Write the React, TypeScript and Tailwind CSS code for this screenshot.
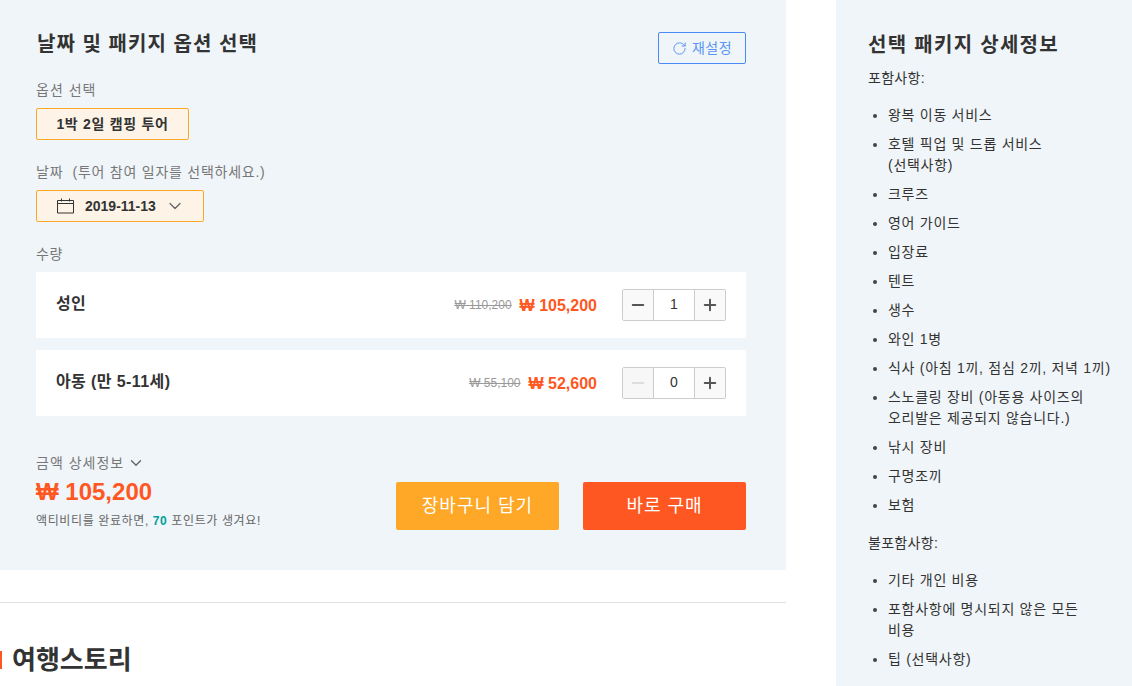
import { ChevronDown, Minus, Plus, RotateCw } from "lucide-react";

const included = [
  "왕복 이동 서비스",
  "호텔 픽업 및 드롭 서비스\n(선택사항)",
  "크루즈",
  "영어 가이드",
  "입장료",
  "텐트",
  "생수",
  "와인 1병",
  "식사 (아침 1끼, 점심 2끼, 저녁 1끼)",
  "스노클링 장비 (아동용 사이즈의\n오리발은 제공되지 않습니다.)",
  "낚시 장비",
  "구명조끼",
  "보험",
];

const excluded = ["기타 개인 비용", "포함사항에 명시되지 않은 모든\n비용", "팁 (선택사항)"];

function Bullets({ items }: { items: string[] }) {
  return (
    <ul className="mt-[16px] flex flex-col gap-[8px]">
      {items.map((item) => (
        <li key={item} className="flex text-[14px] leading-[21px] tracking-[0.72px] whitespace-pre-line text-[#333]">
          <span className="mt-[9px] ml-[5px] mr-[11px] h-[4px] w-[4px] shrink-0 rounded-full bg-[#444]" />
          <span>{item}</span>
        </li>
      ))}
    </ul>
  );
}

function Stepper({ value, minusDisabled }: { value: number; minusDisabled?: boolean }) {
  return (
    <div className="-mt-[1px] flex h-[32px] w-[104px] rounded-[2px] border border-[#ccc] bg-white">
      <div className={`flex w-[30px] items-center justify-center ${minusDisabled ? "bg-[#f7f7f7] text-[#ddd]" : "bg-[#f9f9f9] text-[#555]"}`}>
        <Minus size={18} strokeWidth={2.6} />
      </div>
      <div className="flex flex-1 items-center justify-center border-x border-[#ccc] text-[14px] text-[#333]">
        {value}
      </div>
      <div className="flex w-[30px] items-center justify-center bg-[#f9f9f9] text-[#555]">
        <Plus size={18} strokeWidth={2.6} />
      </div>
    </div>
  );
}

function PriceRow({ name, oldPrice, price, qty, minusDisabled }: { name: string; oldPrice: string; price: string; qty: number; minusDisabled?: boolean }) {
  return (
    <div className="flex h-[66px] items-center bg-white pl-[20px] pr-[20px]">
      <div className="-mt-[2px] flex-1 text-[16px] font-bold tracking-[0.4px] text-[#333]">{name}</div>
      <div className="text-[12px] text-[#999] line-through">₩ {oldPrice}</div>
      <div className="ml-[8px] mt-[2px] text-[16px] font-bold text-[#ff5722]">₩ {price}</div>
      <div className="ml-[25px]">
        <Stepper value={qty} minusDisabled={minusDisabled} />
      </div>
    </div>
  );
}

export default function App() {
  return (
    <div className="flex h-[686px] w-[1132px] overflow-hidden bg-white font-['Liberation_Sans','Noto_Sans_CJK_KR',sans-serif]">
      <div className="w-[786px] shrink-0">
        {/* 옵션 선택 패널 */}
        <div className="h-[570px] bg-[#f0f5f9] pl-[36px] pr-[40px] pt-[32px]">
          <div className="flex h-[32px] items-start justify-between">
            <h2 className="ml-[1px] text-[20px] leading-[24px] font-bold tracking-[1.05px] text-[#333]">날짜 및 패키지 옵션 선택</h2>
            <button className="flex h-[32px] w-[88px] items-center justify-center gap-[5px] rounded-[2px] border border-[#4a8af4] text-[14px] tracking-[0.5px] text-[#5a95f5]">
              <RotateCw size={15} strokeWidth={1.6} />
              재설정
            </button>
          </div>

          <div className="mt-[16px] text-[14px] leading-[20px] tracking-[1px] text-[#777]">옵션 선택</div>
          <button className="mt-[8px] flex h-[32px] w-[153px] items-center justify-center rounded-[2px] border border-[#ffa726] bg-[#fdf3e7] text-[14px] font-bold tracking-[0.7px] text-[#333]">
            1박 2일 캠핑 투어
          </button>

          <div className="mt-[22px] text-[14px] leading-[20px] tracking-[0.75px] text-[#777]">날짜 &nbsp;(투어 참여 일자를 선택하세요.)</div>
          <button className="mt-[8px] flex h-[32px] w-[168px] items-center rounded-[2px] border border-[#ffa726] bg-[#fdf3e7] pl-[20px] text-[14px] font-bold text-[#333]">
            <svg width="17" height="16" viewBox="0 0 17 16" fill="none" stroke="#333" strokeWidth="1">
              <path d="M0.5 2.5h16v12.5h-16zM0.5 5.5h16M4.5 0.5v3M12.5 0.5v3" />
            </svg>
            <span className="ml-[11px]">2019-11-13</span>
            <ChevronDown size={20} strokeWidth={1.6} className="ml-[9px] text-[#666]" />
          </button>

          <div className="mt-[22px] text-[14px] leading-[20px] tracking-[0.7px] text-[#777]">수량</div>
          <div className="mt-[8px] flex flex-col gap-[12px]">
            <PriceRow name="성인" oldPrice="110,200" price="105,200" qty={1} />
            <PriceRow name="아동 (만 5-11세)" oldPrice="55,100" price="52,600" qty={0} minusDisabled />
          </div>

          <div className="mt-[37px] flex items-start justify-between">
            <div>
              <div className="flex items-center gap-[3px] text-[14px] leading-[20px] tracking-[1px] text-[#777]">
                금액 상세정보
                <ChevronDown size={18} strokeWidth={1.8} className="text-[#666]" />
              </div>
              <div className="mt-[4px] text-[24px] leading-[30px] font-bold text-[#ff5722]">₩ 105,200</div>
              <div className="mt-[5px] text-[12px] leading-[18px] tracking-[0.62px] text-[#666]">
                액티비티를 완료하면, <span className="font-bold text-[#00a19b]">70</span> 포인트가 생겨요!
              </div>
            </div>
            <div className="mt-[29px] flex gap-[24px]">
              <button className="h-[48px] w-[163px] rounded-[2px] bg-[#ffa726] text-[18px] tracking-[1px] text-white">장바구니 담기</button>
              <button className="h-[48px] w-[163px] rounded-[2px] bg-[#ff5722] text-[18px] tracking-[1px] text-white">바로 구매</button>
            </div>
          </div>
        </div>

        <div className="mt-[32px] border-t border-[#e0e0e0] pt-[39px]">
          <div className="flex items-center">
            <span className="h-[18px] w-[2px] bg-[#ff5722]" />
            <h2 className="ml-[10px] text-[26px] leading-[36px] font-bold text-[#333]">여행스토리</h2>
          </div>
        </div>
      </div>

      {/* 패키지 상세정보 */}
      <div className="ml-[50px] h-[686px] w-[296px] shrink-0 overflow-hidden bg-[#f0f5f9] pl-[32px] pr-[20px] pt-[33px]">
        <h2 className="text-[20px] leading-[24px] font-bold tracking-[1.3px] text-[#333]">선택 패키지 상세정보</h2>
        <p className="mt-[11px] text-[14px] leading-[21px] tracking-[0.3px] text-[#333]">포함사항:</p>
        <Bullets items={included} />
        <p className="mt-[17px] text-[14px] leading-[21px] tracking-[0.3px] text-[#333]">불포함사항:</p>
        <Bullets items={excluded} />
      </div>
    </div>
  );
}
